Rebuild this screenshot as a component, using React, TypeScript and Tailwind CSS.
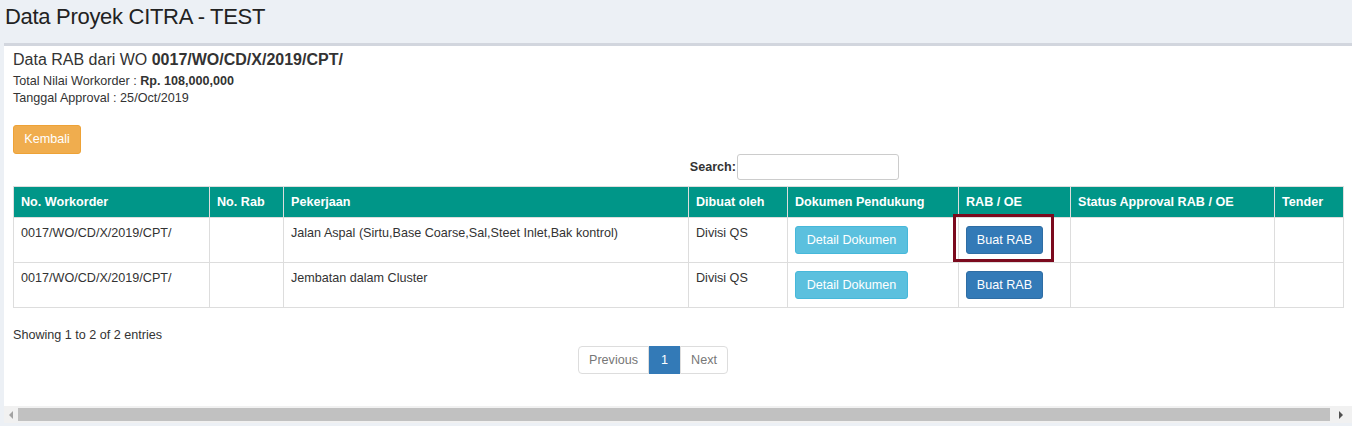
import React from "react";

const cols = [
  { label: "No. Workorder", w: "w-[196px]" },
  { label: "No. Rab", w: "w-[74px]" },
  { label: "Pekerjaan", w: "w-[405px]" },
  { label: "Dibuat oleh", w: "w-[99px]" },
  { label: "Dokumen Pendukung", w: "w-[171px]" },
  { label: "RAB / OE", w: "w-[112px]" },
  { label: "Status Approval RAB / OE", w: "w-[204px]" },
  { label: "Tender", w: "w-[69px]" },
];

const rows = [
  { wo: "0017/WO/CD/X/2019/CPT/", job: "Jalan Aspal (Sirtu,Base Coarse,Sal,Steet Inlet,Bak kontrol)", by: "Divisi QS" },
  { wo: "0017/WO/CD/X/2019/CPT/", job: "Jembatan dalam Cluster", by: "Divisi QS" },
];

export default function App() {
  return (
    <div
      className="w-[1352px] h-[426px] overflow-hidden bg-[#ecf0f5] text-[#333]"
      style={{ fontFamily: '"Liberation Sans", Arial, sans-serif' }}
    >
      <div className="h-[43px] pl-[5px] pt-[4px]">
        <h1 className="text-[22px] leading-[26px] text-[#222] tracking-[-0.3px]">Data Proyek CITRA - TEST</h1>
      </div>
      <div className="ml-[4px] w-[1360px] bg-white border-t-[3px] border-[#d2d6de] flex flex-col">
        <div className="pl-[9px] pt-[2px] h-[360px]">
          <div className="text-[16px] leading-[24px] mb-[1px]">
            Data RAB dari WO <b>0017/WO/CD/X/2019/CPT/</b>
          </div>
          <div className="text-[12.6px] leading-[17px]">
            Total Nilai Workorder : <b>Rp. 108,000,000</b>
          </div>
          <div className="text-[12.6px] leading-[17px]">Tanggal Approval : 25/Oct/2019</div>
          <button className="mt-[18px] h-[29px] w-[68px] rounded-[3px] bg-[#f0ad4e] border border-[#eea236] text-white text-[12.6px] leading-none">
            Kembali
          </button>
          <div className="w-[886px] flex justify-end items-center">
            <label className="text-[12.6px] font-bold mr-[1px]">Search:</label>
            <input className="w-[162px] h-[26px] border border-[#ccc] rounded-[3px]" />
          </div>
          <div className="relative mt-[6px] w-[1330px]">
            <table className="w-[1330px] border-collapse table-fixed text-[12.6px]">
              <thead>
                <tr className="bg-[#009688] text-white h-[31px]">
                  {cols.map((c) => (
                    <th
                      key={c.label}
                      className={`${c.w} border border-[#ddd] px-[7px] text-left font-bold leading-[17px] align-middle`}
                    >
                      {c.label}
                    </th>
                  ))}
                </tr>
              </thead>
              <tbody>
                {rows.map((r, i) => (
                  <tr key={i} className="h-[45px]">
                    <td className="border border-[#ddd] px-[7px] pt-[8px] align-top leading-[14px]">{r.wo}</td>
                    <td className="border border-[#ddd] px-[7px] pt-[8px] align-top"></td>
                    <td className="border border-[#ddd] px-[7px] pt-[8px] align-top leading-[14px]">{r.job}</td>
                    <td className="border border-[#ddd] px-[7px] pt-[8px] align-top leading-[14px]">{r.by}</td>
                    <td className="border border-[#ddd] px-[7px] pt-[8px] align-top">
                      <button className="h-[28px] w-[113px] rounded-[3px] bg-[#5bc0de] border border-[#46b8da] text-white text-[12.6px] leading-none">
                        Detail Dokumen
                      </button>
                    </td>
                    <td className="border border-[#ddd] px-[7px] pt-[8px] align-top">
                      <button className="h-[28px] w-[77px] rounded-[3px] bg-[#337ab7] border border-[#2e6da4] text-white text-[12.6px] leading-none">
                        Buat RAB
                      </button>
                    </td>
                    <td className="border border-[#ddd] px-[7px] pt-[8px] align-top"></td>
                    <td className="border border-[#ddd] px-[7px] pt-[8px] align-top"></td>
                  </tr>
                ))}
              </tbody>
            </table>
            <div className="absolute left-[940px] top-[28px] w-[101px] h-[48px] border-[3px] border-[#7b0a1e]"></div>
          </div>
          <div className="mt-[19px] text-[12.6px] leading-[17px]">Showing 1 to 2 of 2 entries</div>
          <div className="ml-[565px] mt-[2px] flex h-[28px] text-[12.6px]">
            <span className="w-[71px] flex items-center justify-center border border-[#ddd] rounded-l-[4px] text-[#777]">
              Previous
            </span>
            <span className="w-[31px] flex items-center justify-center bg-[#337ab7] border border-[#337ab7] text-white">
              1
            </span>
            <span className="w-[48px] flex items-center justify-center border border-[#ddd] rounded-r-[4px] text-[#777]">
              Next
            </span>
          </div>
        </div>
        <div className="h-[17px] bg-[#f1f1f1] flex items-center w-[1348px]">
          <div className="w-[14px] flex items-center justify-center">
            <svg width="6" height="8" viewBox="0 0 6 8"><path d="M5 0 L1 4 L5 8 Z" fill="#a3a3a3" /></svg>
          </div>
          <div className="flex-1 h-[13px] bg-[#c1c1c1]"></div>
          <div className="w-[22px] flex items-center justify-center">
            <svg width="6" height="8" viewBox="0 0 6 8"><path d="M1 0 L5 4 L1 8 Z" fill="#505050" /></svg>
          </div>
        </div>
      </div>
    </div>
  );
}
